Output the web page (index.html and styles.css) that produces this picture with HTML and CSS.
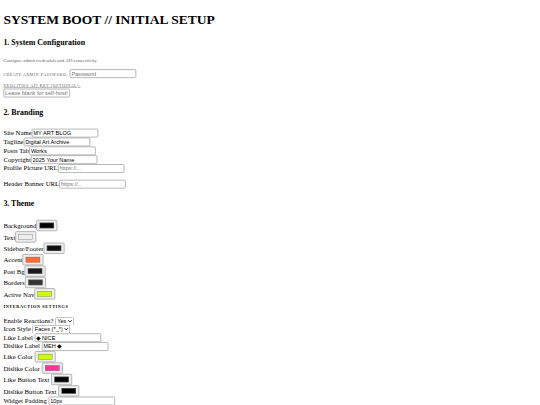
FILE: index.html
```html
<!DOCTYPE html>
<html lang="en">
<head>
<meta charset="utf-8">
<title>System Boot</title>
<link rel="stylesheet" href="styles.css">
</head>
<body>
<h1>SYSTEM BOOT // INITIAL SETUP</h1>

<h3>1. System Configuration</h3>
<p class="note">Configure admin credentials and API connectivity.</p>
<div class="field first"><label class="caps">Create Admin Password:</label> <input placeholder="Password"></div>
<div class="field"><label class="caps link">Neocities API Key (Optional):</label><br><input placeholder="Leave blank for self-host!"></div>

<h3>2. Branding</h3>
<div class="rows">
<label>Site Name</label><input value="MY ART BLOG"><br>
<label>Tagline</label><input value="Digital Art Archive"><br>
<label>Posts Tab</label><input value="Works"><br>
<label>Copyright</label><input value="2025 Your Name"><br>
<label>Profile Picture URL</label><input placeholder="https://..."><br>
<div class="gap"></div>
<label>Header Banner URL</label><input placeholder="https://...">
</div>

<h3>3. Theme</h3>
<div class="rows">
<label>Background</label><input type="color" value="#000000"><br>
<label>Text</label><input type="color" value="#eeeeee"><br>
<label>Sidebar/Footer</label><input type="color" value="#111111"><br>
<label>Accent</label><input type="color" value="#ff6b35"><br>
<label>Post Bg</label><input type="color" value="#1a1a1a"><br>
<label>Borders</label><input type="color" value="#333333"><br>
<label>Active Nav</label><input type="color" value="#ccff00">
</div>

<h4 class="caps-head">Interaction Settings</h4>
<div class="rows tight">
<label>Enable Reactions?</label> <select><option>Yes</option><option>No</option></select><br>
<label>Icon Style</label> <select><option>Faces (*_*)</option></select><br>
<label>Like Label</label> <input value="◆ NICE"><br>
<label>Dislike Label</label> <input value="MEH ◆"><br>
<label>Like Color</label> <input type="color" value="#ccff00"><br>
<label>Dislike Color</label> <input type="color" value="#ff3399"><br>
<label>Like Button Text</label> <input type="color" value="#000000"><br>
<label>Dislike Button Text</label> <input type="color" value="#000000"><br>
<label>Widget Padding</label> <input value="10px">
</div>
</body>
</html>
```
FILE: styles.css
```css
html {
  overflow: hidden;
}
body {
  box-sizing: border-box;
  width: 1280px;
  margin: 0;
  padding: 8px;
  font-family: "Liberation Serif", serif;
  color: #000;
  transform: scale(0.421875);
  transform-origin: 0 0;
}
h1 {
  margin-bottom: 24px;
}
h3 {
  margin: 24px 0;
}
.rows {
  margin-top: 28px;
}
.rows.tight {
  margin-top: 21px;
}
input, select {
  font-family: "Liberation Sans", sans-serif;
  font-size: 13.333px;
}
input:not([type="color"]) {
  box-sizing: border-box;
  width: 158px;
  height: 21px;
  border: 2px solid #aaa;
  border-radius: 3px;
  padding: 1px 2px;
}
input[type="color"] {
  box-sizing: border-box;
  width: 50px;
  height: 27px;
  border: 2px solid #aaa;
  border-radius: 3px;
  padding: 1px 4px;
  background: #eee;
}
.note {
  margin: 24px 0 16px;
  font-size: 11px;
  color: #666;
}
.caps {
  font-size: 9.6px;
  letter-spacing: 1.2px;
  text-transform: uppercase;
  color: #666;
}
.link {
  text-decoration: underline;
}
.field {
  margin-bottom: 12px;
}
.field.first {
  margin-bottom: 7px;
}
.gap {
  height: 16px;
}
.caps-head {
  margin: 10px 0 0;
  font-size: 10px;
  letter-spacing: 1.5px;
  text-transform: uppercase;
}
```
